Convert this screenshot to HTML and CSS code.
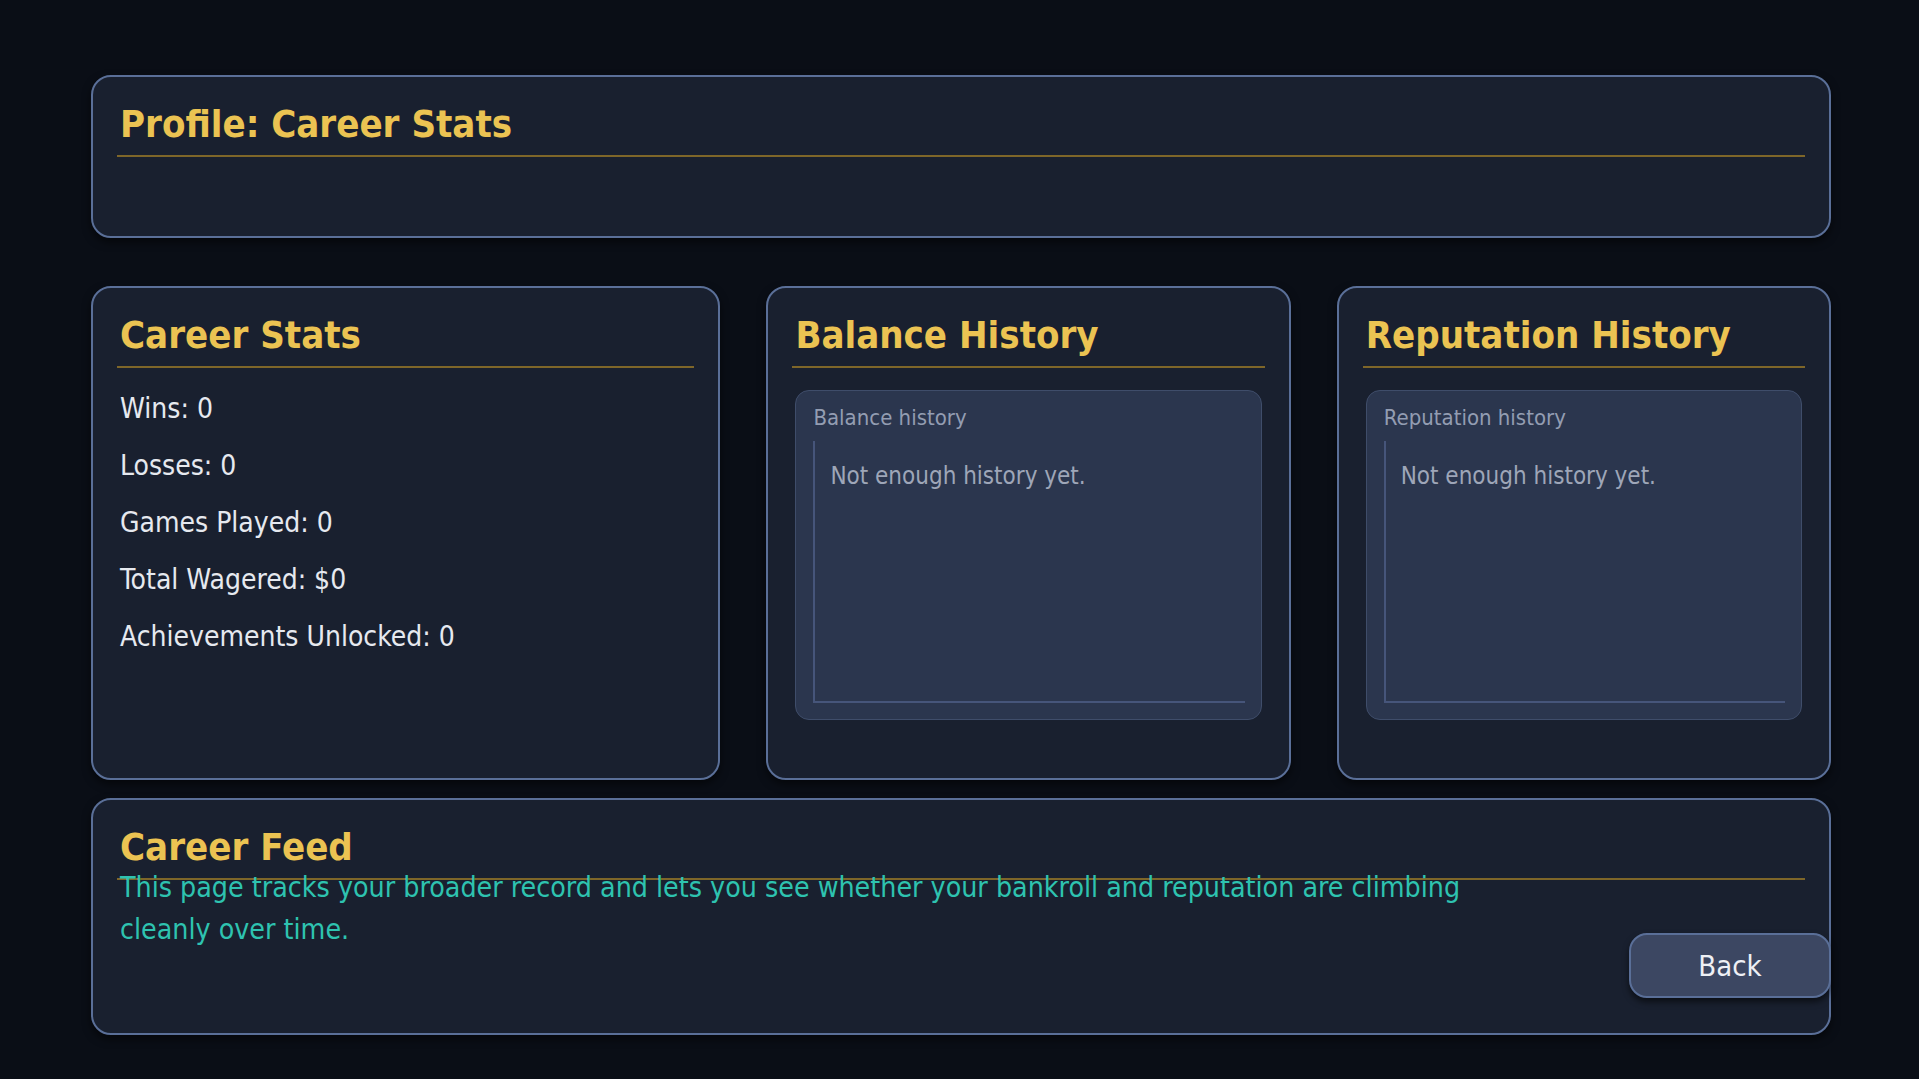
FILE: index.html
```html
<!DOCTYPE html>
<html lang="en">
<head>
<meta charset="utf-8">
<title>Profile: Career Stats</title>
<link rel="stylesheet" href="styles.css">
</head>
<body>
<div class="page">
  <section class="panel panel-top">
    <h1 class="heading">Profile: Career Stats</h1>
  </section>

  <div class="row">
    <section class="panel">
      <h2 class="heading">Career Stats</h2>
      <ul class="stats">
        <li>Wins: 0</li>
        <li>Losses: 0</li>
        <li>Games Played: 0</li>
        <li>Total Wagered: $0</li>
        <li>Achievements Unlocked: 0</li>
      </ul>
    </section>

    <section class="panel">
      <h2 class="heading">Balance History</h2>
      <div class="chart-box">
        <div class="chart-label">Balance history</div>
        <div class="chart"><p class="chart-empty">Not enough history yet.</p></div>
      </div>
    </section>

    <section class="panel">
      <h2 class="heading">Reputation History</h2>
      <div class="chart-box">
        <div class="chart-label">Reputation history</div>
        <div class="chart"><p class="chart-empty">Not enough history yet.</p></div>
      </div>
    </section>
  </div>

  <section class="panel panel-feed">
    <h2 class="heading">Career Feed</h2>
    <div class="feed-body">
      <p class="feed-text">This page tracks your broader record and lets you see whether your bankroll and reputation are climbing cleanly over time.</p>
      <button class="btn-back" type="button">Back</button>
    </div>
  </section>
</div>
</body>
</html>
```

FILE: styles.css
```css
html, body {
  margin: 0;
  padding: 0;
}

body {
  background: #0a0e16;
  font-family: "DejaVu Sans Condensed", "DejaVu Sans", sans-serif;
  color: #e4e7ee;
  width: 1919px;
  height: 1079px;
  overflow: hidden;
}

.page {
  width: 1740px;
  margin-left: 91px;
  padding-top: 75px;
  display: flex;
  flex-direction: column;
}

.panel {
  box-sizing: border-box;
  background: #19202f;
  border: 2px solid #5a6f98;
  border-radius: 20px;
  padding: 22px 24px 0 24px;
  box-shadow: 0 4px 8px rgba(0, 0, 0, 0.55);
}

.heading {
  margin: 0;
  padding: 0 3px 6px 3px;
  font-size: 38px;
  line-height: 50px;
  font-weight: bold;
  color: #ebc352;
  border-bottom: 2px solid #7e6629;
  white-space: nowrap;
}

.panel-top {
  height: 163px;
  margin-bottom: 48px;
}

.row {
  display: grid;
  grid-template-columns: 629fr 524fr 494fr;
  gap: 46px;
  height: 494px;
  margin-bottom: 18px;
}

.stats {
  list-style: none;
  margin: 12px 0 0 0;
  padding: 0 0 0 3px;
  font-size: 28px;
  line-height: 57px;
  color: #e6e9ef;
}

.chart-box {
  box-sizing: border-box;
  height: 330px;
  margin: 22px 3px 0 3px;
  background: #2b364e;
  border: 1px solid #3f4d6a;
  border-radius: 14px;
  padding: 14px 16px 16px 17px;
  display: flex;
  flex-direction: column;
}

.chart-label {
  font-size: 22px;
  line-height: 26px;
  color: #939db2;
}

.chart {
  flex: 1;
  margin-top: 10px;
  border-left: 2px solid #46557a;
  border-bottom: 2px solid #46557a;
  padding: 21px 0 0 15px;
}

.chart-empty {
  margin: 0;
  font-size: 24px;
  line-height: 28px;
  color: #9ea6b8;
}

.panel-feed {
  height: 237px;
}

.feed-body {
  display: flex;
  align-items: flex-start;
  margin-top: -13px;
}

.feed-text {
  flex: 0 1 1400px;
  margin: 0;
  padding-left: 3px;
  font-size: 28.3px;
  line-height: 42px;
  color: #2ec3b0;
}

.btn-back {
  margin: 66px -26px 0 auto;
  width: 202px;
  height: 65px;
  box-sizing: border-box;
  background: #3c4762;
  border: 2px solid #5a6f98;
  border-radius: 18px;
  color: #eef0f5;
  font-family: "DejaVu Sans Condensed", "DejaVu Sans", sans-serif;
  font-size: 29px;
  padding: 0;
  box-shadow: 0 4px 6px rgba(0, 0, 0, 0.55);
}
```
